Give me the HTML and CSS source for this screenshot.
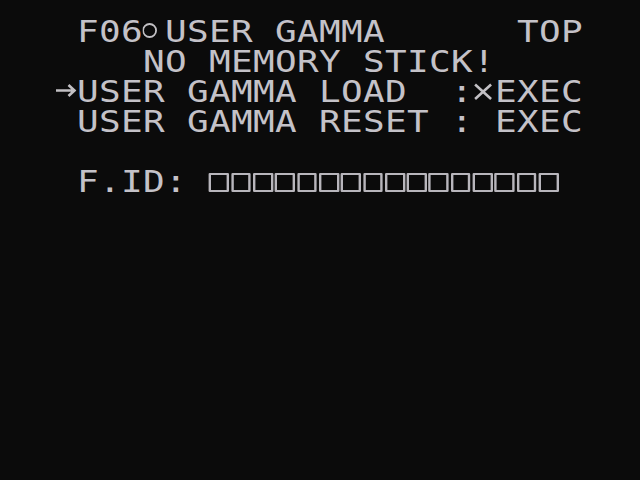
FILE: index.html
```html
<!DOCTYPE html>
<html lang="en">
<head>
    <meta charset="UTF-8">
    <title>F06 User Gamma</title>
    <link rel="stylesheet" href="styles.css">
</head>
<body>

    <div class="screen">
        <div class="row"> F06<svg class="cell" viewBox="0 0 22 30" preserveAspectRatio="none"><circle cx="7" cy="13.5" r="6.5" fill="none" stroke="#c2c0c4" stroke-width="1.8"/></svg>USER GAMMA      TOP</div>
        <div class="row">    NO MEMORY STICK!</div>
        <div class="row"><svg class="cell" viewBox="0 0 22 30" preserveAspectRatio="none"><path d="M1 13.5H20M13.5 8L19.5 13.5L13.5 19" fill="none" stroke="#c2c0c4" stroke-width="2.6"/></svg>USER GAMMA LOAD  :<svg class="cell" viewBox="0 0 22 30" preserveAspectRatio="none"><path d="M2.5 7.5L18.5 22M18.5 7.5L2.5 22" fill="none" stroke="#c2c0c4" stroke-width="2.6"/></svg>EXEC</div>
        <div class="row"> USER GAMMA RESET : EXEC</div>
        <div class="row"></div>
        <div class="row"> F.ID: <span class="id-boxes" id="idBoxes"></span></div>
    </div>

    <script>
        // 16 empty slots for the file id
        let boxes = document.getElementById("idBoxes");
        for (let i = 0; i < 16; i++) {
            let box = document.createElement("span");
            box.classList.add("box");
            boxes.appendChild(box);
        }
    </script>

</body>
</html>
```

FILE: styles.css
```css
body {
    margin: 0;
    padding: 0;
    background: #0b0b0b;
    width: 640px;
    height: 480px;
    overflow: hidden;
}

.screen {
    padding: 17px 0 0 55px;
    color: #c4c2c8;
    font-family: "DejaVu Sans Mono", monospace;
    font-size: 30px;
}

/* the OSD font is wider than any mono font we have, so stretch each row */
.row {
    width: 480px;
    height: 30px;
    line-height: 30px;
    white-space: pre;
    letter-spacing: 0.273px;
    transform: scaleX(1.2);
    transform-origin: 0 0;
}

/* one character cell: 22px on screen after the stretch */
.cell {
    display: inline-block;
    width: 18.333px;
    height: 30px;
    vertical-align: top;
}

.id-boxes {
    display: inline-flex;
    vertical-align: top;
    margin-top: 6px;
}

.box {
    width: 12.667px;
    height: 15px;
    border: 2px solid #b8b6bc;
    border-radius: 1px;
    margin-right: 1.667px;
}
```
